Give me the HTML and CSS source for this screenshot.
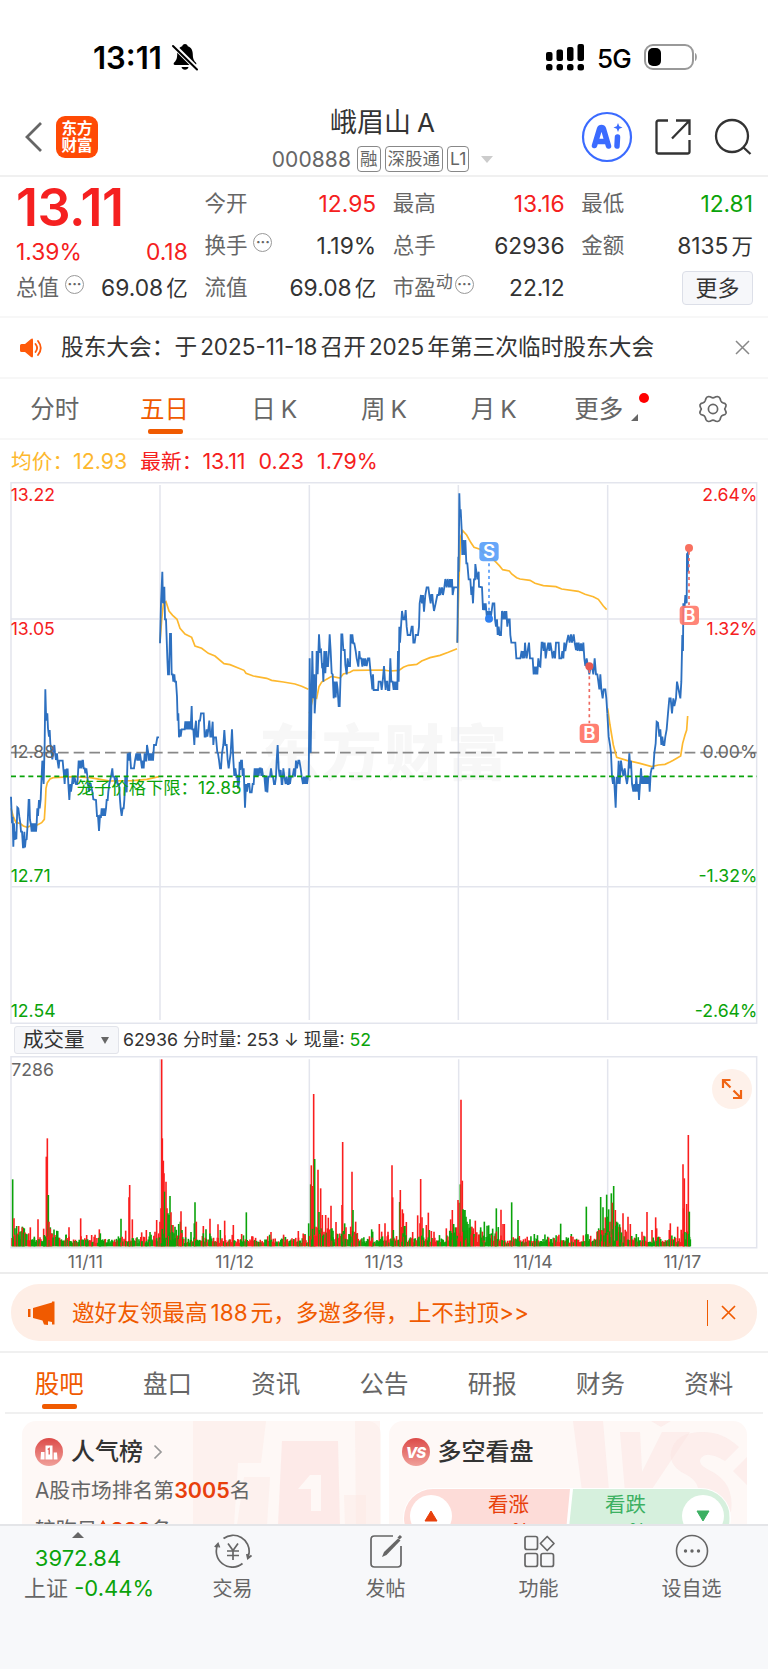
FILE: index.html
```html
<!DOCTYPE html>
<html lang="zh-CN">
<head>
  <meta charset="UTF-8">
  <title>峨眉山A 000888</title>
  <link rel="stylesheet" href="styles.css">
</head>
<body>
  <div class="status-bar">
    <span class="time">13:11</span>
    <svg class="bell" width="28" height="28" viewBox="0 0 28 28">
      <path d="M14 1c1.700 0 2.600 1 2.800 2.300 3.600 1.200 5 4.200 5 8.200 0 4.500 1.500 6.500 3.200 8.300.8 1 .3 2.200-1 2.200H4c-1.300 0-1.800-1.200-1-2.200 1.700-1.800 3.200-3.800 3.200-8.300 0-4 1.400-7 5-8.200C11.400 2 12.300 1 14 1z"/>
      <path d="M10.500 24h7c-.4 1.700-1.800 2.700-3.500 2.700s-3.100-1-3.500-2.700z"/>
      <path d="M2.500 2.500l23 23" stroke="#fff" stroke-width="5"/>
      <path d="M2 3l24 23.500" stroke="#000" stroke-width="2" stroke-linecap="round"/>
    </svg>
    <svg class="signal" width="40" height="28" viewBox="0 0 40 28">
      <rect x="0" y="9" width="6.500" height="9" rx="2"/>
      <rect x="10.500" y="6.500" width="6.500" height="11.500" rx="2"/>
      <rect x="21" y="4" width="6.500" height="14" rx="2"/>
      <rect x="31.500" y="1" width="6.500" height="17" rx="2"/>
      <rect x="0" y="21" width="6.500" height="6.500" rx="2.500"/>
      <rect x="10.500" y="21" width="6.500" height="6.500" rx="2.500"/>
      <rect x="21" y="21" width="6.500" height="6.500" rx="2.500"/>
      <rect x="31.500" y="21" width="6.500" height="6.500" rx="2.500"/>
    </svg>
    <span class="network">5G</span>
    <svg class="battery" width="54" height="26" viewBox="0 0 54 26">
      <rect x="1" y="1" width="48" height="24" rx="8" fill="none" stroke="#999" stroke-width="2"/>
      <rect x="4" y="4" width="13" height="18" rx="5"/>
      <path d="M51 9c2.500.8 2.500 7.200 0 8z" fill="#999"/>
    </svg>
  </div>

  <div class="header">
    <div class="header-left">
      <svg width="20" height="32" viewBox="0 0 20 32"><path d="M17 2L3 16l14 14" fill="none" stroke="#666" stroke-width="2.800"/></svg>
      <div class="logo"><span>东方</span><span>财富</span></div>
    </div>
    <div class="header-title">
      <div class="name">峨眉山<b>A</b></div>
      <div class="code">
        <span class="num">000888</span>
        <i class="badge">融</i><i class="badge">深股通</i><i class="badge">L1</i>
        <i class="caret"></i>
      </div>
    </div>
    <div class="header-icons">
      <svg width="52" height="52" viewBox="0 0 52 52">
        <circle cx="26" cy="26" r="24" fill="none" stroke="#3b6bff" stroke-width="2.200"/>
        <path d="M13.500 34.500L18.500 18q.6-1.500 2-1.500t2 1.500L27.500 35M16 30.500h9" fill="none" stroke="#3b6bff" stroke-width="5.500" stroke-linecap="round" stroke-linejoin="round"/>
        <path d="M36.500 26L36 35" stroke="#3b6bff" stroke-width="5.500" stroke-linecap="round"/>
        <path d="M37 12l1.300 3.200 3.200 1.300-3.200 1.300L37 21l-1.300-3.200-3.200-1.300 3.200-1.300z" fill="#3b6bff"/>
      </svg>
      <svg width="38" height="38" viewBox="0 0 38 38" fill="none" stroke="#333" stroke-width="2.300">
        <path d="M14 2.500H4.500q-2 0-2 2v29q0 2 2 2h29q2 0 2-2V22"/>
        <path d="M22 2.500h13.500V17M35.500 2.500L18 20.500"/>
      </svg>
      <svg width="40" height="38" viewBox="0 0 40 38" fill="none" stroke="#333" stroke-width="2.300">
        <circle cx="19" cy="18" r="16"/><path d="M30 29l7.500 7"/>
      </svg>
    </div>
  </div>

  <div class="quote">
    <div class="quote-col first">
      <div class="price num">13.11</div>
      <div class="row change red"><span class="num">1.39%</span><span class="num">0.18</span></div>
      <div class="row last"><label>总值<i class="dots">···</i></label><span class="num">69.08<b>亿</b></span></div>
    </div>
    <div class="quote-col">
      <div class="row"><label>今开</label><span class="num red">12.95</span></div>
      <div class="row"><label>换手<i class="dots">···</i></label><span class="num">1.19%</span></div>
      <div class="row"><label>流值</label><span class="num">69.08<b>亿</b></span></div>
    </div>
    <div class="quote-col">
      <div class="row"><label>最高</label><span class="num red">13.16</span></div>
      <div class="row"><label>总手</label><span class="num">62936</span></div>
      <div class="row"><label>市盈<sup>动</sup><i class="dots tight">···</i></label><span class="num">22.12</span></div>
    </div>
    <div class="quote-col">
      <div class="row"><label>最低</label><span class="num green">12.81</span></div>
      <div class="row"><label>金额</label><span class="num">8135<b>万</b></span></div>
      <div class="row end"><button class="more">更多</button></div>
    </div>
  </div>

  <div class="notice">
    <svg width="24" height="20" viewBox="0 0 24 20">
      <path d="M1.500 6H5l6-5q2-1.200 2 1v16q0 2.200-2 1l-6-5H1.500Q0 14 0 12.500v-5Q0 6 1.500 6z" fill="#ff5a0a"/>
      <path d="M15.500 6q3.200 4 0 8M18 3q5.500 7 0 14" fill="none" stroke="#ff5a0a" stroke-width="1.800" stroke-linecap="round"/>
    </svg>
    <span class="notice-text">股东大会：于<b>2025-11-18</b>召开<b>2025</b>年第三次临时股东大会</span>
    <svg width="15" height="15" viewBox="0 0 15 15"><path d="M1 1l13 13M14 1L1 14" stroke="#888" stroke-width="1.500"/></svg>
  </div>

  <div class="period-tabs">
    <div class="tab">分时</div>
    <div class="tab active">五日</div>
    <div class="tab">日<b>K</b></div>
    <div class="tab">周<b>K</b></div>
    <div class="tab">月<b>K</b></div>
    <div class="tab tab-more">更多<i class="corner"></i><i class="red-dot"></i></div>
    <div class="tab gear">
      <svg width="30" height="28" viewBox="0 0 30 28" fill="none" stroke="#666" stroke-width="1.700">
        <path d="M10.500 1.500q2 0 2.600.8 1.900 1 3.800 0 .6-.8 2.600-.8 1.800.3 2.500 1.900l.8 2.400q.6 1.600 2.300 2 2.200.3 2.900 2 .3 1.200-.8 3.200-1 1 0 2 1.100 2 .8 3.200-.7 1.700-2.900 2-1.700.4-2.300 2l-.8 2.400q-.7 1.600-2.500 1.900-2 0-2.600-.8-1.900-1-3.800 0-.6.8-2.600.8-1.800-.3-2.500-1.900l-.8-2.400q-.6-1.600-2.300-2-2.200-.3-2.900-2-.3-1.200.8-3.200 1-1 0-2-1.100-2-.8-3.200.7-1.700 2.900-2 1.700-.4 2.300-2l.8-2.400q.7-1.600 2.500-1.900z"/>
        <circle cx="15" cy="14" r="4.600"/>
      </svg>
    </div>
  </div>

  <div class="legend">
    <span class="avg">均价：<b>12.93</b></span>
    <span>最新：<b>13.11</b></span>
    <b>0.23</b>
    <b>1.79%</b>
  </div>

  <svg class="chart" id="priceChart" width="768" height="545" viewBox="0 0 2304 1635">
    <text class="watermark" x="1153" y="884">东方财富</text>
    <g class="grid">
      <path d="M33 8H2270V1630H33zM33 417H2270M33 1220H2270"/>
      <path d="M480 15V1620M928 15V1620M1375 15V1620M1823 15V1620"/>
    </g>
    <path d="M33 818H2270" class="base-line"/>
    <g class="avg-line">
      <path d="M33 985L40 1010 48 1028 60 1030 70 1038 82 1042 95 1036 112 1035 125 1028 133 1018 136 970 138 925 142 908 150 897 160 893 220 890 270 893 300 898 330 903 400 902 440 898 477 890"/>
      <path d="M480 487L485 420 490 372 498 365 507 393 518 406 531 418 540 445 555 462 575 472 585 498 605 505 625 520 645 528 672 551 690 554 732 571 738 580 760 588 800 595 815 601 850 606 885 612 905 619 925 628"/>
      <path d="M928 700L940 650 950 655 957 620 965 606 985 595 995 589 1020 594 1030 582 1050 577 1060 571 1150 570 1170 573 1197 571 1210 562 1225 556 1250 553 1265 543 1290 533 1320 526 1345 517 1371 506"/>
      <path d="M1372 488L1377 300 1382 170 1388 152 1400 165 1412 187 1422 202 1440 208 1462 228 1480 238 1498 257 1508 269 1528 273 1535 282 1550 293 1560 297 1590 301 1605 310 1630 317 1668 320 1685 327 1735 334 1755 343 1780 350 1795 358 1810 378 1820 389"/>
      <path d="M1823 685L1830 735 1835 765 1840 795 1850 832 1880 841 1920 850 1955 860 1975 855 1995 853 2010 846 2020 841 2042 828 2048 790 2055 765 2060 750 2063 708"/>
    </g>
    <g class="price-line" id="priceLines"></g>
    <path d="M33 889H2270" class="limit-line"/>
    <g class="marks">
      <path d="M1467 250V395" stroke="#549bf8"/>
      <circle cx="1467" cy="416" r="12" fill="#2f80f0"/>
      <rect x="1438" y="186" width="58" height="58" rx="12" fill="#5a9ff8" fill-opacity=".92"/>
      <text x="1467" y="235">S</text>
      <path d="M1768 570V730M2067 215V375" stroke="#ee6a60"/>
      <circle cx="1768" cy="559" r="12" fill="#e85a52"/>
      <circle cx="2067" cy="204" r="12" fill="#f8705f"/>
      <rect x="1739" y="731" width="58" height="58" rx="12" fill="#ff7869" fill-opacity=".95"/>
      <text x="1768" y="780">B</text>
      <rect x="2039" y="377" width="58" height="58" rx="12" fill="#ff7869" fill-opacity=".9"/>
      <text x="2068" y="426">B</text>
    </g>
    <g class="axis">
      <text x="32" y="62" class="up">13.22</text>
      <text x="32" y="465" class="up">13.05</text>
      <text x="32" y="835">12.88</text>
      <text x="32" y="1205" class="down">12.71</text>
      <text x="32" y="1610" class="down">12.54</text>
      <g text-anchor="end">
        <text x="2272" y="62" class="up">2.64%</text>
        <text x="2272" y="465" class="up">1.32%</text>
        <text x="2272" y="835">0.00%</text>
        <text x="2272" y="1205" class="down">-1.32%</text>
        <text x="2272" y="1610" class="down">-2.64%</text>
      </g>
      <text x="230" y="941" class="down limit">笼子价格下限：<tspan x="594">12.85</tspan></text>
    </g>
  </svg>

  <div class="volume-bar">
    <div class="indicator">成交量<i></i></div>
    <span><b>62936</b> 分时量: <b>253</b> ↓ 现量: <b class="green">52</b></span>
  </div>

  <div class="volume-wrap">
    <svg class="chart" id="volumeChart" width="768" height="219" viewBox="0 9 2304 657">
      <g class="grid">
        <path d="M33 20H2270V593H33z"/>
        <path d="M480 28V588M928 28V588M1376 28V588M1823 28V588"/>
      </g>
      <g id="volumeBars"></g>
      <g class="axis">
        <text x="34" y="79">7286</text>
        <g text-anchor="middle">
          <text x="256" y="653">11/11</text>
          <text x="704" y="653">11/12</text>
          <text x="1152" y="653">11/13</text>
          <text x="1599" y="653">11/14</text>
          <text x="2047" y="653">11/17</text>
        </g>
      </g>
    </svg>
    <div class="expand">
      <svg width="22" height="22" viewBox="0 0 22 22" fill="none" stroke="#f06414" stroke-width="2.200">
        <path d="M9.500 2H2v8M2 2l7.500 7.500M20 12v8h-8M20 20l-7.500-7.500"/>
      </svg>
    </div>
  </div>

  <div class="promo-wrap">
    <div class="promo">
      <svg width="27" height="24" viewBox="0 0 27 24" fill="#f05a00">
        <rect x="0" y="8" width="2.500" height="8"/>
        <path d="M5 7L24 1.500V21l-4-.8V24l-4-.5-1.500-4L5 17z"/><path d="M24 .5h2.500v23H24z"/>
      </svg>
      <span class="promo-text">邀好友领最高<b>188</b>元，多邀多得，上不封顶&gt;&gt;</span>
      <i class="bar"></i>
      <svg width="15" height="15" viewBox="0 0 15 15"><path d="M1 1l13 13M14 1L1 14" stroke="#f05a00" stroke-width="1.700"/></svg>
    </div>
  </div>

  <div class="info-tabs">
    <div class="tab active">股吧</div>
    <div class="tab">盘口</div>
    <div class="tab">资讯</div>
    <div class="tab">公告</div>
    <div class="tab">研报</div>
    <div class="tab">财务</div>
    <div class="tab">资料</div>
  </div>

  <div class="cards">
    <div class="card">
      <svg class="card-bg" width="358" height="104" viewBox="0 0 358 104">
        <g fill="#fce6e3" fill-opacity=".42">
          <path d="M171 0h73l-5 42H216l-4 62H171zM333 0h25v104h-24z"/>
          <path fill-rule="evenodd" fill-opacity=".75" d="M260 20h56l2 84h-62zM276 68l12-14h11v36h-10V68z"/>
          <path d="M222 56h26l-3 48h-30zM322 74h22v30h-21z"/>
        </g>
      </svg>
      <div class="card-title">
        <svg width="28" height="28" viewBox="0 0 28 28">
          <circle cx="14" cy="14" r="14" fill="url(#redFade)"/>
          <path d="M6 14h3.500v7.500H5.500zM10.500 7.500h7v14h-7zM18.700 14.500H22l.5 7h-3.800z" fill="#fff"/>
          <path d="M12.700 11.500l1.500-1v6" fill="none" stroke="#e05a55" stroke-width="1.300"/>
        </svg>
        <h3>人气榜</h3>
        <svg class="arrow" width="10" height="16" viewBox="0 0 10 16"><path d="M1.500 1.500L8 8l-6.500 6.500" fill="none" stroke="#999" stroke-width="1.700"/></svg>
      </div>
      <p>A股市场排名第<b>3005</b>名</p>
      <p class="second">较昨日<i class="up-arrow"></i><b>222</b>名</p>
    </div>
    <div class="card">
      <svg class="card-bg" width="358" height="104" viewBox="0 0 358 104">
        <g fill="#fce3e1" fill-opacity=".5">
          <path d="M184 0h30l6 70h-27z"/>
          <path d="M231 11h20l2 40 20-40h28l-40 60h-25z"/>
          <path d="M350 26q-16-15-36-15-28 0-32 20-2 14 14 22 14 7 14 20l32 18q4-30-22-42-12-6-8-12 6-8 24 3zM262 0h20l-10 6zM358 36l-14 14 14 14z"/>
        </g>
      </svg>
      <div class="card-title">
        <svg width="28" height="28" viewBox="0 0 28 28">
          <defs>
            <linearGradient id="redFade" x1="0" y1="0" x2="0" y2="1">
              <stop offset="0" stop-color="#dc4a48"/><stop offset="1" stop-color="#f0a09a"/>
            </linearGradient>
          </defs>
          <circle cx="14" cy="14" r="14" fill="url(#redFade)"/>
          <text x="13.500" y="20" class="vs">VS</text>
        </svg>
        <h3>多空看盘</h3>
      </div>
      <div class="vote">
        <div class="vote-up"><i class="knob"><svg width="14" height="12" viewBox="0 0 14 12"><path d="M7 1l6 10H1z" fill="#e8400c" stroke="#e8400c" stroke-linejoin="round"/></svg></i><span>看涨<small>--%</small></span></div>
        <div class="vote-down"><span>看跌<small>--%</small></span><i class="knob"><svg width="14" height="12" viewBox="0 0 14 12"><path d="M7 11L1 1h12z" fill="#3cb062" stroke="#3cb062" stroke-linejoin="round"/></svg></i></div>
      </div>
    </div>
  </div>

  <div class="bottom-bar">
    <div class="index">
      <i class="tri"></i>
      <span class="num">3972.84</span>
      <span>上证 <b class="num">-0.44%</b></span>
    </div>
    <div class="item">
      <svg width="38" height="34" viewBox="0 0 38 34" fill="none" stroke="#666" stroke-width="1.700">
        <path d="M9.500 4.500A16 16 0 0 1 35 19.500q-.5 2.500-1.500 4.500M28.500 29.500A16 16 0 0 1 4 10M.8 13L4 9.500l1.500 4M37.500 21.500l-3.700 3-1-4.500"/>
        <path d="M14 9.500l5 7 5-7M19 16.500V26M13 17h12M13 21.500h12"/>
      </svg>
      <span>交易</span>
    </div>
    <div class="item">
      <svg width="34" height="34" viewBox="0 0 34 34" fill="none" stroke="#666" stroke-width="1.700">
        <path d="M24 2H5.500Q2 2 2 5.500v24Q2 33 5.500 33h23q3.500 0 3.500-3.500V12"/>
        <path d="M13 23l2-5L29 4.500l2.500 2L17.500 21z" fill="#666" stroke="none"/>
        <path d="M29.500 4.500L32 2" stroke-width="3"/>
      </svg>
      <span>发帖</span>
    </div>
    <div class="item">
      <svg width="34" height="34" viewBox="0 0 34 34" fill="none" stroke="#666" stroke-width="1.700" stroke-linejoin="round">
        <rect x="3" y="2.500" width="12.500" height="13" rx="2"/>
        <rect x="3" y="19.500" width="12.500" height="13" rx="2"/>
        <rect x="19" y="19.500" width="12.500" height="13" rx="2"/>
        <path d="M25.200 2.500L32 9.500l-6.800 7-6.800-7z"/>
      </svg>
      <span>功能</span>
    </div>
    <div class="item">
      <svg width="34" height="34" viewBox="0 0 34 34" fill="#666">
        <circle cx="17" cy="17" r="15.500" fill="none" stroke="#666" stroke-width="1.600"/>
        <circle cx="10.500" cy="17" r="1.700"/><circle cx="17" cy="17" r="1.700"/><circle cx="23.500" cy="17" r="1.700"/>
      </svg>
      <span>设自选</span>
    </div>
  </div>

  <script src="chart.js"></script>
</body>
</html>
```

FILE: styles.css
```css
* {
  box-sizing: border-box;
}
body {
  width: 768px;
  height: 1669px;
  margin: 0;
  display: flex;
  flex-direction: column;
  overflow: hidden;
  background: #fff;
  color: #333;
  font-family: Inter, "Noto Sans CJK SC", sans-serif;
  font-size: 22px;
  line-height: 1;
}
body > div,
body > svg {
  flex-shrink: 0;
}
i {
  font-style: normal;
}
b {
  font-weight: normal;
}
svg {
  display: block;
  flex-shrink: 0;
}
.red {
  color: #f52020;
}
.green {
  color: #0aa30a;
}

/* status bar */
.status-bar {
  display: flex;
  align-items: center;
  height: 100px;
  padding: 14px 70px 0 93px;
  color: #000;
}
.time {
  font-size: 31px;
  font-weight: 600;
}
.bell {
  margin-left: 9px;
}
.signal {
  margin-left: auto;
}
.network {
  margin: 3px 13px 0 11px;
  font-size: 26px;
  font-weight: 500;
  letter-spacing: -0.8px;
}

/* header */
.header {
  display: flex;
  justify-content: space-between;
  height: 77px;
  padding: 0 15px 2px 24px;
  border-bottom: 2px solid #f0f0f0;
}
.header-left {
  display: flex;
  align-items: center;
  gap: 12px;
  width: 160px;
}
.logo {
  display: flex;
  flex-direction: column;
  justify-content: center;
  width: 42px;
  height: 42px;
  border-radius: 9px;
  background: #ff4a05;
  color: #fff;
  font-size: 15.500px;
  font-weight: 700;
  line-height: 17px;
  text-align: center;
}
.header-title {
  width: 260px;
  text-align: center;
}
.name {
  padding-top: 9px;
  font-size: 27px;
  line-height: 28px;
}
.name b {
  margin-left: 6px;
  font-size: 26px;
}
.code {
  display: flex;
  align-items: center;
  justify-content: center;
  gap: 4px;
  margin-top: 9px;
  color: #666;
  font-size: 21px;
  white-space: nowrap;
}
.code .num {
  margin-right: 2px;
  letter-spacing: 0.1px;
}
.badge {
  height: 26px;
  padding: 0 2px;
  border: 1.500px solid #888;
  border-radius: 4px;
  font-size: 17.500px;
  line-height: 23px;
}
.caret {
  margin-left: 8px;
  border: 6px solid transparent;
  border-top: 7px solid #ccc;
  border-bottom: 0;
}
.header-icons {
  display: flex;
  align-items: center;
  gap: 21px;
}

/* quote */
.quote {
  display: grid;
  grid-template-columns: repeat(4, 1fr);
  column-gap: 16.700px;
  height: 141px;
  padding: 6px 15px 0 16px;
  border-bottom: 2px solid #f7f7f7;
}
.row {
  display: flex;
  align-items: center;
  justify-content: space-between;
  height: 42px;
}
.row label {
  display: flex;
  align-items: center;
  color: #666;
  font-size: 21.500px;
}
.row .num {
  font-size: 22.800px;
}
.num b {
  margin-left: 3px;
  font-size: 21.500px;
}
.price {
  height: 50px;
  color: #f52020;
  font-size: 52px;
  font-weight: 600;
  line-height: 50px;
  letter-spacing: -0.500px;
}
.row.change {
  height: 38px;
}
.row.last {
  height: 34px;
}
.dots {
  width: 19px;
  height: 19px;
  margin: -8px 0 0 6px;
  border: 1.500px solid #999;
  border-radius: 50%;
  font-size: 14px;
  font-weight: 700;
  line-height: 15px;
  text-align: center;
}
.dots.tight {
  margin-left: 2px;
}
.row sup {
  margin-top: -12px;
  font-size: 17px;
}
.row.end {
  justify-content: flex-end;
}
.more {
  width: 71px;
  height: 34px;
  padding: 0;
  border: 1px solid #dcdfe8;
  border-radius: 4px;
  background: #f6f7fa;
  color: #333;
  font: inherit;
}

/* notice */
.notice {
  display: flex;
  align-items: center;
  height: 61px;
  padding: 0 18px 0 20px;
  border-bottom: 2px solid #f7f7f7;
}
.notice-text {
  flex: 1;
  margin-left: 17px;
  font-size: 22.700px;
}
.notice-text b,
.promo-text b {
  margin: 0 3px;
  font-size: 22.500px;
}

/* tabs */
.period-tabs,
.info-tabs {
  display: flex;
  color: #666;
  font-size: 24.500px;
}
.period-tabs {
  height: 61px;
  border-bottom: 2px solid #f7f7f7;
}
.tab {
  position: relative;
  width: 14.2857%;
  line-height: 60px;
  text-align: center;
}
.tab b {
  margin-left: 5px;
}
.tab.tab-more {
  padding-right: 9px;
}
.tab.active {
  color: #f05a00;
}
.tab.active::after {
  content: "";
  position: absolute;
  bottom: 4px;
  left: 50%;
  width: 35px;
  height: 5px;
  margin-left: -17px;
  border-radius: 2px;
  background: #f05a00;
}
.corner {
  position: absolute;
  right: 20px;
  bottom: 17px;
  border-bottom: 7px solid #666;
  border-left: 7px solid transparent;
}
.red-dot {
  position: absolute;
  top: 14px;
  right: 9px;
  width: 10px;
  height: 10px;
  border-radius: 50%;
  background: #f00;
}
.gear {
  display: flex;
  align-items: center;
  justify-content: center;
}

/* chart */
.legend {
  display: flex;
  align-items: center;
  gap: 13px;
  height: 40px;
  padding: 3px 0 0 11px;
  color: #f52020;
  font-size: 20.700px;
}
.legend b {
  font-size: 21.400px;
}
.legend .avg {
  color: #fdb82e;
}
.chart {
  font-size: 53px;
}
.grid {
  fill: none;
  stroke: #e3e5ed;
  stroke-width: 4.500;
}
.base-line {
  stroke: #888;
  stroke-width: 5;
  stroke-dasharray: 32 15;
}
.limit-line {
  stroke: #0aa30a;
  stroke-width: 5;
  stroke-dasharray: 15 11;
}
.avg-line {
  fill: none;
  stroke: #fdb82e;
  stroke-width: 5;
}
.price-line {
  fill: none;
  stroke: #2d70c0;
  stroke-width: 5.500;
}
.watermark {
  fill: #f7f7f7;
  font-size: 180px;
  font-weight: 900;
  letter-spacing: 8px;
  text-anchor: middle;
}
.marks path {
  stroke-width: 5;
  stroke-dasharray: 9 10;
}
.marks text {
  fill: #fff;
  font-size: 56px;
  font-weight: 600;
  text-anchor: middle;
}
.axis {
  fill: #666;
}
.axis .up {
  fill: #f52020;
}
.axis .down {
  fill: #0aa30a;
}
.axis .limit {
  font-size: 52px;
}
.volume-bar {
  display: flex;
  align-items: center;
  height: 28px;
  padding: 2px 0 0 14px;
  font-size: 17.800px;
}
.indicator {
  display: flex;
  align-items: center;
  justify-content: space-between;
  width: 105px;
  height: 28px;
  margin-right: 4px;
  padding: 0 9px 0 8px;
  border: 1px solid #e2e4ea;
  border-radius: 3px;
  background: #f6f7fa;
  font-size: 20.500px;
}
.indicator i {
  border: 4.500px solid transparent;
  border-top: 7px solid #666;
  border-bottom: 0;
}
.volume-wrap {
  position: relative;
  height: 221px;
  border-bottom: 2px solid #ececec;
}
.expand {
  position: absolute;
  top: 16px;
  right: 16px;
  display: flex;
  align-items: center;
  justify-content: center;
  width: 40px;
  height: 40px;
  border-radius: 50%;
  background: #fef1ea;
}

/* promo */
.promo-wrap {
  height: 79px;
  padding: 10px 11px 0;
  border-bottom: 2px solid #f0f0f0;
}
.promo {
  display: flex;
  align-items: center;
  height: 57px;
  padding: 0 21px 0 17px;
  border-radius: 28px;
  background: #feeee6;
  color: #f05a00;
}
.promo-text {
  flex: 1;
  margin-left: 17px;
  padding-top: 1px;
  font-size: 22.600px;
}
.bar {
  width: 1.500px;
  height: 26px;
  margin-right: 13px;
  background: #f05a00;
}

/* info */
.info-tabs {
  height: 61px;
  margin: 0 5px;
  border-bottom: 2px solid #f0f0f0;
}
.info-tabs .tab {
  line-height: 62px;
}
.info-tabs .tab.active::after {
  bottom: 3px;
}
.cards {
  display: flex;
  gap: 8px;
  height: 110px;
  padding: 7px 21px 0 22px;
  overflow: hidden;
}
.card {
  position: relative;
  flex: 1;
  height: 150px;
  padding: 16px 13px;
  border-radius: 14px;
  background: #fef8f6;
}
.card-bg {
  position: absolute;
  top: 0;
  left: 0;
}
.card-title {
  position: relative;
  display: flex;
  align-items: center;
  height: 30px;
}
.card h3 {
  margin: 0 0 0 8px;
  font-size: 24px;
  font-weight: 500;
}
.arrow {
  margin-left: 10px;
}
.vs {
  fill: #fff;
  font-size: 15px;
  font-style: italic;
  font-weight: 800;
  letter-spacing: -1px;
  text-anchor: middle;
}
.card p {
  position: relative;
  margin: 12px 0 0;
  color: #666;
  font-size: 20.800px;
  line-height: 22px;
}
.card p b {
  color: #e8400c;
  font-size: 21.500px;
  font-weight: 600;
}
.card p.second {
  display: flex;
  align-items: center;
  margin-top: 17px;
}
.up-arrow {
  width: 0;
  margin: -11px 1px 0 0;
  border-right: 6px solid transparent;
  border-bottom: 10px solid #e8400c;
  border-left: 6px solid transparent;
}
.vote {
  position: relative;
  display: flex;
  width: 328px;
  height: 60px;
  margin: 21px 0 0 1px;
  overflow: hidden;
  border: 1.500px solid #fff;
  border-radius: 30px;
  background: #fff;
  font-size: 20.500px;
}
.vote-up,
.vote-down {
  display: flex;
  justify-content: space-between;
}
.vote-up {
  width: 167px;
  padding: 6px 41px 0 6px;
  clip-path: polygon(0 0, 100% 0, 161px 100%, 0 100%);
  background: #fddcd8;
  color: #e8400c;
}
.vote-down {
  width: 163px;
  margin-left: -3px;
  padding: 6px 6px 0 38px;
  clip-path: polygon(6px 0, 100% 0, 100% 100%, 0 100%);
  background: #d6f0dd;
  color: #3cb062;
}
.vote small {
  display: block;
  margin-top: 6px;
  font-size: 18px;
  text-align: right;
}
.knob {
  display: flex;
  align-items: center;
  justify-content: center;
  width: 42px;
  height: 42px;
  border-radius: 50%;
  background: #fff;
}

/* bottom bar */
.bottom-bar {
  display: flex;
  height: 146px;
  border-top: 2px solid #e4e5e8;
  background: #f7f8fa;
  color: #666;
  font-size: 20px;
}
.index {
  position: relative;
  display: flex;
  flex-direction: column;
  align-items: center;
  width: 156px;
  padding-top: 21px;
  font-size: 22px;
}
.index .num {
  color: #0aa30a;
}
.index > span:last-child {
  margin: 8px -22px 0 0;
}
.tri {
  position: absolute;
  top: 6px;
  border: 6px solid transparent;
  border-top: 0;
  border-bottom: 6px solid #666;
}
.item {
  display: flex;
  flex: 1;
  flex-direction: column;
  align-items: center;
  padding-top: 8px;
}
.item span {
  margin-top: 11px;
}
```

FILE: chart.js
```javascript
const NS = 'http://www.w3.org/2000/svg';

// minute prices, one "x,y" list per trading day
const days = [
  '33,950 36,1030 38,1010 40,1100 42,1030 44,1080 47,1055 49,1078 52,982 55,985 58,1010 61,1030 63,1055 66,1055 69,1102 71,1102 73,1055 75,1102 77,1080 80,1078 83,1030 86,960 88,960 90,1020 93,1035 95,1055 97,1030 99,1055 101,1030 103,1055 106,1030 108,1055 110,1030 112,985 114,1008 117,960 119,985 122,958 124,910 127,842 129,880 131,912 134,790 136,628 138,700 140,722 142,700 144,745 147,770 149,750 151,790 154,815 157,838 160,815 163,795 165,818 168,840 171,820 173,845 176,865 178,842 188,842 190,865 192,885 194,912 196,868 198,890 200,868 203,868 205,912 208,960 211,912 213,935 216,912 218,890 220,912 223,888 228,912 232,912 234,880 236,842 238,865 241,842 244,865 247,842 249,842 251,865 254,865 256,880 259,865 262,888 264,912 267,935 269,912 272,912 277,935 280,958 288,960 291,1008 294,1008 297,1053 300,1008 303,1010 305,985 307,1008 309,985 311,1008 313,985 315,1008 318,985 320,960 323,960 325,935 328,912 333,890 337,865 339,890 343,890 346,912 350,890 353,912 357,912 360,960 362,985 365,1008 368,985 371,985 373,960 376,888 378,912 380,937 383,820 386,842 388,820 390,820 393,865 402,865 405,842 409,820 412,842 414,820 417,842 420,820 423,842 426,865 429,842 431,865 434,820 436,842 439,842 441,795 445,820 447,842 450,820 453,842 456,820 459,842 462,795 468,795 472,772 477,772',
  '480,490 483,370 487,275 489,370 493,320 495,418 498,418 502,535 504,583 507,583 510,462 513,462 515,583 518,583 520,605 523,583 525,605 528,605 531,650 533,722 535,700 537,772 540,748 542,770 545,748 554,748 556,724 558,748 560,724 562,748 564,724 567,748 569,724 572,748 575,678 577,748 580,748 583,795 585,748 588,722 590,770 594,770 597,722 600,722 603,700 611,700 614,770 617,770 620,748 622,770 625,748 628,722 631,770 634,770 636,748 638,725 640,795 642,772 648,772 650,795 652,818 654,820 657,840 660,865 663,865 666,820 670,795 673,750 676,795 680,795 683,840 686,865 689,842 692,820 696,748 700,840 703,888 706,865 709,890 712,888 714,925 717,910 719,845 721,870 723,842 726,842 728,888 731,865 735,983 738,912 741,935 744,912 748,912 750,937 755,937 758,912 761,912 764,865 767,888 769,865 771,888 774,865 776,888 779,865 782,865 784,888 786,865 789,888 793,888 795,912 797,935 799,890 802,937 805,890 810,890 813,865 816,890 819,890 822,912 825,912 828,890 830,840 833,795 836,865 839,890 842,870 845,912 847,912 850,865 853,890 857,912 860,890 863,912 866,912 868,865 870,912 873,890 878,890 882,865 885,890 888,842 891,865 895,842 898,842 902,865 905,890 909,912 912,890 915,912 918,890 921,912 924,890 926,890',
  '926,890 928,700 929,535 932,818 937,513 940,655 943,583 944,700 948,630 950,513 953,583 957,463 960,513 963,510 966,558 968,555 970,605 973,513 976,580 979,513 981,558 984,558 987,510 989,463 992,513 995,580 998,583 1001,655 1004,605 1007,652 1010,605 1013,628 1016,678 1019,678 1022,580 1024,463 1027,463 1030,510 1034,510 1036,555 1040,583 1043,535 1046,558 1050,558 1052,463 1055,490 1057,463 1060,490 1063,490 1067,513 1070,535 1075,560 1078,513 1080,535 1084,535 1087,560 1090,535 1094,558 1096,535 1100,558 1104,535 1108,535 1112,580 1115,605 1117,628 1119,583 1121,630 1134,630 1136,605 1142,605 1145,630 1148,605 1152,558 1155,605 1157,630 1159,605 1162,605 1164,630 1168,630 1171,535 1174,605 1178,605 1181,630 1184,605 1187,630 1190,605 1192,630 1194,513 1196,605 1198,440 1200,488 1203,440 1206,393 1210,418 1214,418 1217,390 1220,440 1223,465 1231,465 1235,440 1238,440 1240,488 1244,488 1247,465 1254,465 1257,440 1259,370 1263,345 1266,370 1269,345 1272,395 1276,345 1280,322 1285,322 1288,345 1292,370 1294,345 1297,345 1299,370 1302,393 1307,370 1312,345 1316,345 1319,322 1321,345 1326,322 1329,345 1333,322 1336,297 1340,322 1343,297 1347,322 1350,297 1353,322 1356,297 1358,345 1362,322 1371,322',
  '1372,488 1375,230 1376,275 1378,40 1380,110 1382,88 1385,150 1387,225 1390,180 1393,225 1396,180 1399,250 1402,250 1406,298 1411,298 1414,345 1416,320 1419,370 1422,298 1425,298 1426,252 1429,275 1432,298 1436,275 1437,320 1446,322 1449,390 1452,370 1454,390 1457,370 1459,393 1461,418 1463,393 1466,418 1469,393 1472,415 1475,393 1478,370 1483,370 1485,418 1488,440 1491,418 1493,465 1496,440 1499,465 1503,465 1506,393 1510,418 1513,393 1516,418 1519,393 1522,440 1525,418 1529,418 1531,465 1534,488 1546,488 1549,535 1561,535 1565,513 1568,535 1570,513 1573,535 1575,488 1577,513 1580,535 1583,513 1587,488 1590,535 1598,535 1601,583 1604,560 1607,583 1610,560 1612,583 1615,535 1618,558 1621,560 1625,488 1628,488 1631,513 1634,488 1637,535 1640,513 1645,488 1648,513 1651,488 1655,513 1658,535 1662,513 1665,535 1668,488 1676,488 1678,535 1684,535 1687,513 1690,535 1693,488 1696,513 1700,488 1705,465 1709,488 1713,463 1716,488 1721,463 1724,488 1728,510 1730,488 1733,513 1736,488 1740,513 1743,490 1746,513 1750,488 1753,535 1756,558 1760,535 1764,560 1768,583 1772,560 1776,560 1780,583 1784,535 1788,583 1792,583 1795,605 1798,628 1801,583 1804,628 1808,655 1811,628 1816,628 1819,655 1822,700',
  '1822,700 1826,770 1830,795 1833,820 1836,890 1839,912 1842,890 1847,983 1850,890 1853,912 1856,842 1859,912 1863,842 1866,865 1870,888 1874,865 1877,890 1881,912 1884,890 1888,820 1891,865 1893,842 1896,912 1900,935 1903,912 1906,935 1909,890 1912,935 1915,912 1917,960 1920,912 1923,865 1926,912 1929,888 1932,912 1935,890 1938,912 1941,890 1944,912 1947,888 1949,935 1952,880 1955,865 1960,865 1963,820 1967,790 1970,725 1974,728 1978,770 1981,748 1984,795 1987,770 1990,795 1993,795 1996,770 2000,748 2004,700 2008,655 2012,655 2016,700 2020,655 2023,678 2028,655 2031,605 2036,630 2041,655 2044,605 2047,465 2049,513 2050,370 2053,395 2056,345 2060,370 2061,220 2064,275 2064,205 2066,205'
];

days.forEach(points => {
  const line = document.createElementNS(NS, 'polyline');
  line.setAttribute('points', points);
  document.getElementById('priceLines').appendChild(line);
});

// larger volumes: r = up, g = down, then x,top
const peaks = 'g38,388 r42,505 g45,535 g50,528 r56,528 g60,545 g67,530 g70,533 g73,535 r86,550 r91,532 g103,560 r114,508 r120,562 r131,536 g133,555 r139,320 r142,265 g145,435 r147,515 g151,532 g155,550 g198,555 r207,532 r242,505 r260,555 r275,555 r298,538 g301,550 g363,506 r377,542 r387,442 r389,405 r397,508 r425,547 r439,540 g450,546 r465,545 r470,510 r476,550 r480,515 r483,475 r485,28 r487,265 r490,332 r492,370 g494,425 r498,395 r501,475 g504,490 g507,495 g510,438 r513,487 g516,525 r519,525 g522,550 g525,530 g536,522 g541,515 r543,484 g546,540 r557,530 g573,546 g583,520 g585,457 r589,515 r610,528 g618,538 r630,506 r654,523 g661,540 r674,512 r700,525 r725,552 g739,487 r757,560 r813,546 g851,560 r895,543 g915,552 g926,520 g932,403 r934,346 r937,408 r941,132 g944,327 r948,530 r954,359 g957,486 r962,415 g964,535 r967,495 r972,545 r977,495 g980,552 r985,503 g988,545 r993,467 g996,535 g999,542 r1008,516 r1026,465 r1028,276 g1034,520 r1038,532 r1052,530 r1056,365 g1059,480 r1067,515 g1115,538 g1118,545 r1138,522 r1145,545 r1155,520 r1164,545 r1176,346 r1178,442 g1180,540 g1199,456 r1201,420 r1207,478 r1210,490 g1213,528 r1219,516 r1238,546 r1253,496 r1260,520 r1262,387 r1266,502 g1269,535 r1279,525 r1285,488 g1288,540 r1294,543 r1302,545 r1339,535 r1352,508 r1357,480 g1361,522 g1366,532 r1370,532 r1374,450 r1377,458 g1381,403 r1383,149 r1387,392 g1389,478 g1392,480 g1395,480 g1398,500 g1401,515 g1404,522 g1410,508 g1413,530 r1416,530 r1420,535 r1426,512 g1442,532 r1447,545 g1453,515 g1466,526 g1474,550 g1486,550 g1489,475 r1503,479 r1509,522 r1513,522 g1535,457 g1554,510 r1558,558 g1603,552 g1682,521 g1714,552 r1750,556 g1759,470 g1764,553 r1792,545 g1796,535 g1802,441 r1805,540 g1809,472 g1812,535 r1816,502 g1820,434 g1823,500 g1826,478 r1830,515 g1834,430 r1837,458 g1841,408 r1846,480 g1850,515 g1853,518 r1857,530 r1861,532 r1869,490 r1884,500 r1891,522 g1909,552 r1926,545 r1941,486 r1956,540 r1967,502 r1970,535 g1976,560 r2008,540 r2011,520 r2033,530 r2049,343 r2051,475 r2053,385 r2060,462 r2065,255 g2068,485 g2071,568';

function bar(color, x, top) {
  const path = document.createElementNS(NS, 'path');
  path.setAttribute('d', `M${x} ${top}V589`);
  path.setAttribute('stroke', color === 'r' ? '#fa1e1e' : '#0aa30a');
  path.setAttribute('stroke-width', 4.8);
  document.getElementById('volumeBars').appendChild(path);
}

peaks.split(' ').forEach(p => {
  const [x, top] = p.slice(1).split(',');
  bar(p[0], Number(x), Number(top));
});

// regular minutes, busier right after the open
let seed = 11;
function rand() {
  seed = (seed * 16807) % 2147483647;
  return seed / 2147483647;
}
const busy = [[33, 80], [134, 175], [485, 550], [928, 1075], [1190, 1215], [1340, 1500], [1790, 1880], [2040, 2068]];
for (let x = 36; x < 2070; x += 2.8) {
  const lift = busy.some(b => x >= b[0] && x <= b[1]) ? 38 : 10;
  bar(rand() < 0.45 ? 'r' : 'g', x, 581 - lift * rand() - 26 * rand() * rand());
}
```
